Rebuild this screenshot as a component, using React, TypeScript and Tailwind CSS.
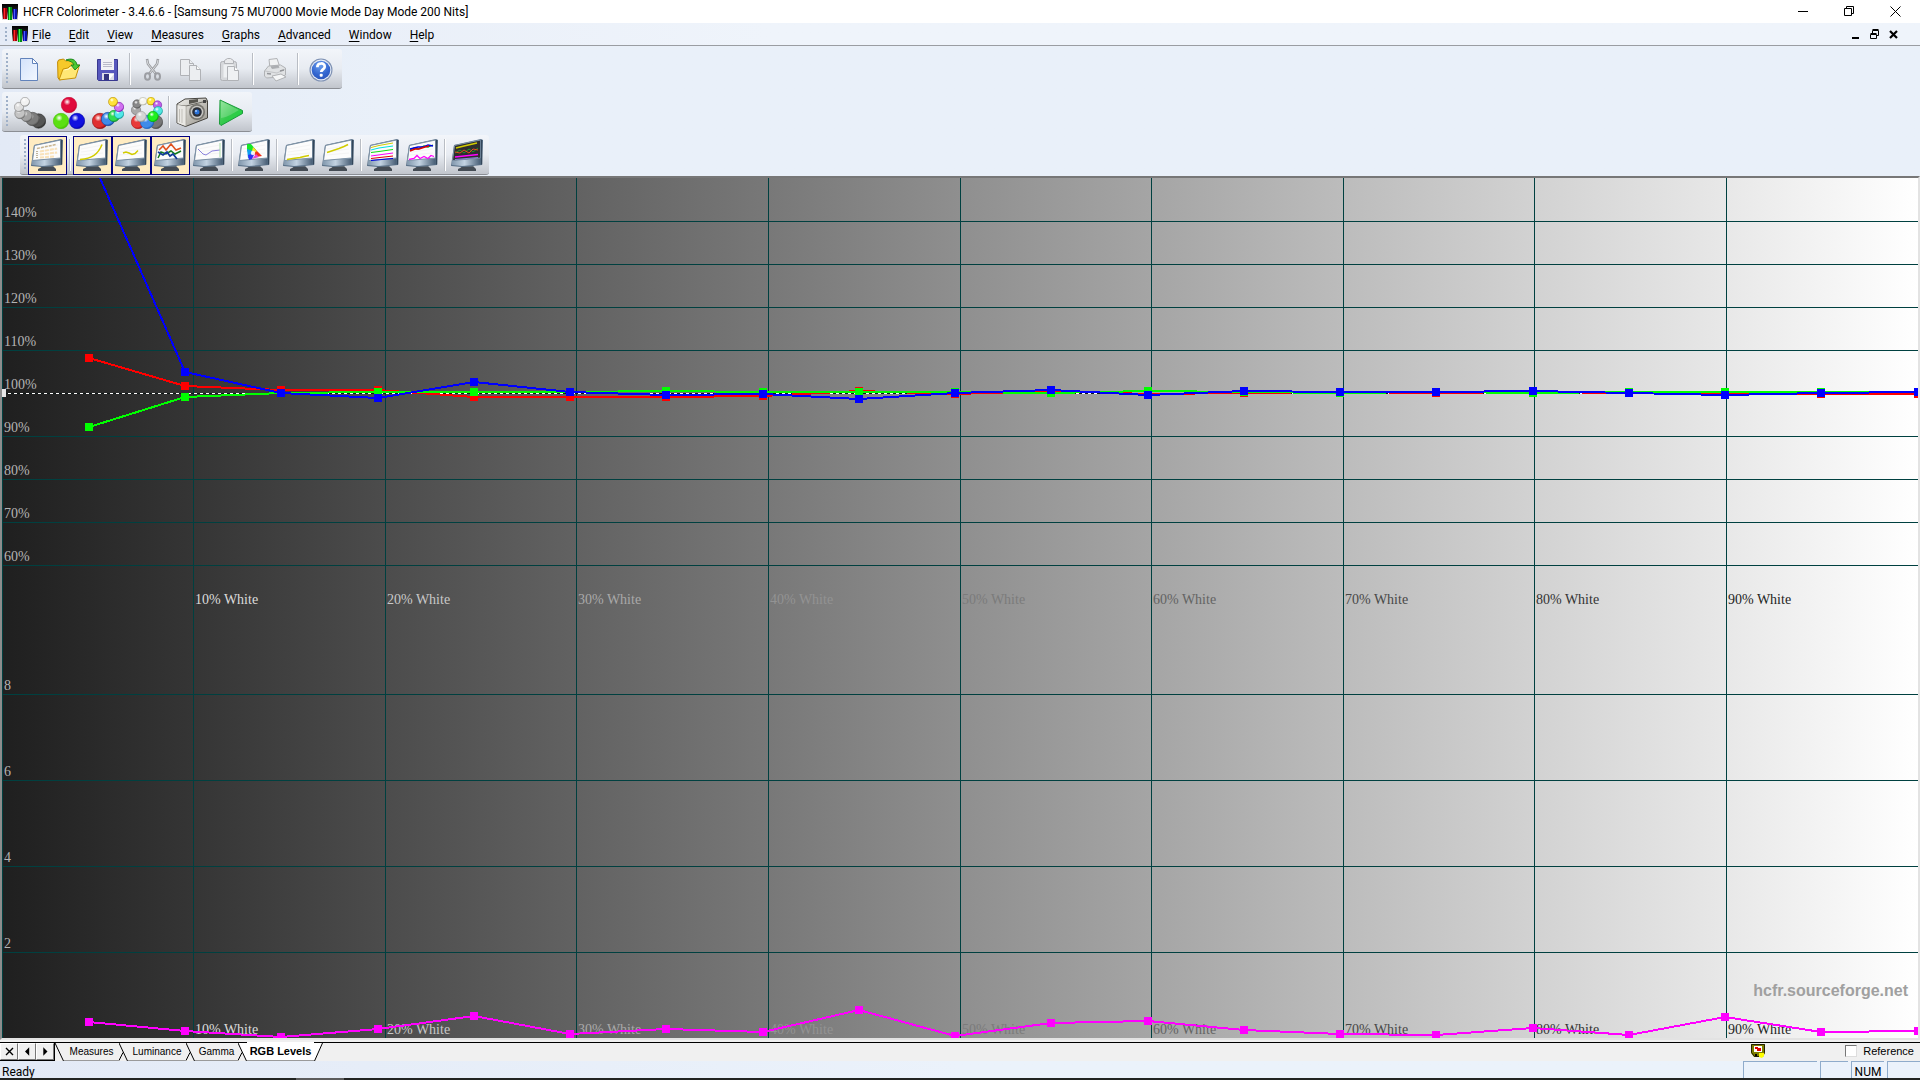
import { useEffect, useRef, useState } from 'react';
import type { ReactNode } from 'react';

const UI_FONT = "font-['Roboto','Noto_Sans',sans-serif]";

/* ---------- application logo ---------- */
function AppLogo() {
  return (
    <svg width="16" height="16" viewBox="0 0 16 16" className="shrink-0" aria-hidden="true">
      <defs>
        <linearGradient id="logoBg" x1="0" y1="0" x2="0" y2="1">
          <stop offset="0" stopColor="#000" />
          <stop offset=".45" stopColor="#222" />
          <stop offset="1" stopColor="#e8e8e8" />
        </linearGradient>
      </defs>
      <rect width="16" height="16" fill="url(#logoBg)" />
      <rect x="1" y="4" width="4" height="11" fill="#a00008" />
      <rect x="2" y="4" width="1" height="11" fill="#ff2a2a" />
      <rect x="6" y="3" width="4" height="13" fill="#008a14" />
      <rect x="7" y="3" width="1" height="13" fill="#3bff4a" />
      <rect x="11" y="5" width="4" height="10" fill="#0a10a8" />
      <rect x="12" y="5" width="1" height="10" fill="#4a5cff" />
    </svg>
  );
}

/* ---------- toolbar icons ---------- */
function NewIcon() {
  return (
    <svg width="24" height="24" viewBox="0 0 24 24">
      <defs>
        <linearGradient id="pg" x1="0" y1="0" x2="1" y2="1">
          <stop offset="0" stopColor="#d3e2fb" />
          <stop offset="1" stopColor="#f2f7ff" />
        </linearGradient>
      </defs>
      <path d="M2.500 .5h12l5 5v17h-17z" fill="url(#pg)" stroke="#6283bb" />
      <path d="M14.500 .5v5h5z" fill="#fff" stroke="#6283bb" strokeLinejoin="round" />
    </svg>
  );
}

function OpenIcon() {
  return (
    <svg width="24" height="24" viewBox="0 0 24 24">
      <path d="M.6 4l1-2 5-1 2 2 7-1 2 2v8L3 22l-2-2z" fill="#f6c92a" stroke="#c28a06" />
      <path d="M2 22L6 11l5-1 2-2 9.500-1-4 13z" fill="#ffe775" stroke="#c89208" strokeLinejoin="round" />
      <path d="M7.500 12l4.500-1 2-2 6-.5" stroke="#fff8c8" fill="none" />
      <path d="M9 2c5-2 10-1 11 5h3l-5 5-4-5h3c-1-3-4-4-8-5z" fill="#4cc832" stroke="#16811a" strokeWidth=".9" />
    </svg>
  );
}

function SaveIcon() {
  return (
    <svg width="24" height="24" viewBox="0 0 24 24">
      <path d="M1.500 1.500h20v21h-19l-1-1z" fill="#5757bd" stroke="#38388f" />
      <rect x="5" y="1" width="13" height="11" fill="#f1f1f6" />
      <path d="M7 4.500h9M7 6.500h9M7 8.500h9" stroke="#b9b9c9" />
      <rect x="6" y="15" width="12" height="7" fill="#dcdce8" />
      <path d="M8 16h5v6H8z" fill="#34347e" />
      <path d="M13 16h5l-5 6z" fill="#fff" />
    </svg>
  );
}

function CutIcon() {
  return (
    <svg width="24" height="24" viewBox="0 0 24 24" fill="none">
      <path d="M6 1l1 5 8 10M17 1l-1 5-8 10" stroke="#9b9da1" strokeWidth="2.600" />
      <path d="M6 2l1 4 7 9M17 2l-1 4-7 9" stroke="#d9dbde" strokeWidth="1" />
      <ellipse cx="6.500" cy="18.500" rx="2.500" ry="3.300" stroke="#9c9ea3" strokeWidth="2" />
      <ellipse cx="16.500" cy="18.500" rx="2.500" ry="3.300" stroke="#9c9ea3" strokeWidth="2" />
    </svg>
  );
}

function CopyIcon() {
  return (
    <svg width="24" height="24" viewBox="0 0 24 24" stroke="#b0b2b6" fill="#eceef1">
      <path d="M.5 1.500h9l4 4v12H.5z" />
      <path d="M9.500 1.500v4h4" />
      <path d="M9.500 7.500h7l4 4v11h-11z" />
      <path d="M16.500 7.500v4h4" fill="#fafafa" />
    </svg>
  );
}

function PasteIcon() {
  return (
    <svg width="24" height="24" viewBox="0 0 24 24" stroke="#b0b2b6" fill="#d6d8db">
      <rect x="1.500" y="3.500" width="16" height="19" rx="2" />
      <rect x="4.500" y="6.500" width="10" height="13" fill="#eef0f2" stroke="none" />
      <path d="M5.500 5.500v-3l3-2h3l3 2v3z" fill="#e9eaec" />
      <path d="M8.500 8.500h7l4 4v10h-11z" fill="#eff1f3" />
      <path d="M15.500 8.500v4h4" fill="#fff" />
    </svg>
  );
}

function PrintIcon() {
  return (
    <svg width="24" height="24" viewBox="0 0 24 24" stroke="#b0b2b5">
      <path d="M5 1.500l8-1 3 9-10 1z" fill="#f1f2f3" />
      <path d="M.5 13l4-5 12-1 5 3v7l-5 2-14 1-2-2z" fill="#e0e2e4" />
      <path d="M1 13l12 2 8-4" fill="none" stroke="#c2c4c7" />
      <path d="M7 8.500l7-1 1 2-7 1z" fill="#a9abaf" />
      <path d="M8 18l9-2 5 3-10 4z" fill="#f5f6f7" />
      <path d="M3 15.500l4 .5M16 13l4-1" stroke="#94969a" strokeWidth="1.500" />
    </svg>
  );
}

function HelpIcon() {
  return (
    <svg width="24" height="24" viewBox="0 0 24 24">
      <defs>
        <radialGradient id="hp" cx=".45" cy=".25" r=".85">
          <stop offset="0" stopColor="#6da0ee" />
          <stop offset=".6" stopColor="#3265cf" />
          <stop offset="1" stopColor="#2a53b8" />
        </radialGradient>
      </defs>
      <circle cx="12" cy="12" r="11.500" fill="#7e91b3" />
      <circle cx="12" cy="12" r="10.400" fill="#e7edf7" />
      <circle cx="12" cy="12" r="9.300" fill="url(#hp)" />
      <path d="M8.300 9.200c0-5 7.800-4.800 7.400-.4-.2 2.500-3.400 2.700-3.500 5.200" stroke="#fff" strokeWidth="2.700" fill="none" />
      <rect x="10.700" y="15.700" width="3" height="3" rx="1" fill="#fff" />
    </svg>
  );
}

type Ball = [number, number, number, string, string];

function Balls({ id, balls }: { id: string; balls: Ball[] }) {
  return (
    <svg width="32" height="32" viewBox="0 0 32 32">
      <defs>
        {balls.map((b, i) => (
          <radialGradient key={i} id={id + i} cx=".38" cy=".3" r=".75">
            <stop offset="0" stopColor="#fff" />
            <stop offset=".3" stopColor={b[3]} />
            <stop offset=".75" stopColor={b[3]} />
            <stop offset="1" stopColor={b[4]} />
          </radialGradient>
        ))}
      </defs>
      {balls.map((b, i) => (
        <circle key={i} cx={b[0]} cy={b[1]} r={b[2] - 0.3} fill={`url(#${id}${i})`} stroke={b[4]} strokeWidth=".6" />
      ))}
    </svg>
  );
}

const grayBalls: Ball[] = [
  [24.500, 24, 7.500, '#555', '#222'],
  [18.500, 22, 7, '#7c7c7c', '#484848'],
  [12.500, 19, 6, '#a2a2a2', '#5c5c5c'],
  [6, 16.500, 5.500, '#c4c4c4', '#707070'],
  [5, 10, 5, '#dedede', '#8a8a8a'],
  [11, 4.800, 4.800, '#f2f2f2', '#8c8c8c'],
];
const primaryBalls: Ball[] = [
  [16, 8, 8, '#e00a3c', '#c4002c'],
  [8, 24, 8, '#5be012', '#43bd00'],
  [24, 24, 8, '#1010e0', '#0000a8'],
];
const colorBalls: Ball[] = [
  [8, 24, 8, '#e03030', '#900a0a'],
  [16, 22, 7, '#3f8be8', '#0d3ea0'],
  [22, 19, 6, '#30dc50', '#0a8a28'],
  [27, 17, 5, '#50e8e8', '#0d9494'],
  [27, 10, 5, '#d070f0', '#7a10a8'],
  [21, 4.800, 4.800, '#ffe23c', '#b58a00'],
];
const ringBalls: Ball[] = [
  [7, 25, 7, '#e83a3a', '#b01010'],
  [25, 25, 7, '#777', '#444'],
  [16, 25, 7, '#3f8be8', '#1660c0'],
  [5, 13, 5, '#aaa', '#777'],
  [6, 7, 4.500, '#888', '#555'],
  [12, 4.200, 4.200, '#f5f5f0', '#b5b5a5'],
  [20, 4.200, 4.200, '#ffe83c', '#bd9a00'],
  [26.500, 8, 4.500, '#c060e8', '#7a28b0'],
  [27, 14, 4.800, '#50e8e0', '#1aa0a0'],
  [22, 19.500, 5.500, '#20f020', '#00a800'],
  [10, 19.500, 5.500, '#d5d5d5', '#999'],
];

function CameraIcon() {
  return (
    <svg width="32" height="32" viewBox="0 0 32 32">
      <defs>
        <linearGradient id="cam" x1="0" y1="0" x2="1" y2="1">
          <stop offset="0" stopColor="#f1f0ec" />
          <stop offset="1" stopColor="#96938b" />
        </linearGradient>
      </defs>
      <path d="M1 7l8-5 10-.5L30 1l1.500 3v17l-22 8.500L1 26z" fill="url(#cam)" stroke="#46443f" />
      <path d="M1 8l9 1 21-5" fill="none" stroke="#6a6862" />
      <path d="M10 9v20" stroke="#aaa8a0" />
      <path d="M1.500 8l8 1v20l-8-3z" fill="#e9e8e4" />
      <path d="M3.500 12v13M6 12v14" stroke="#c3c1bb" />
      <path d="M13 3l9-1v3l-9 2z" fill="#57554f" />
      <circle cx="21" cy="15" r="8" fill="#77756f" />
      <circle cx="21" cy="15" r="6.300" fill="#c7c6c2" />
      <circle cx="21" cy="15" r="4.800" fill="#2b2f38" />
      <circle cx="21" cy="15" r="2.500" fill="#2a72d8" />
      <circle cx="20" cy="14" r="1" fill="#a8ccff" />
      <rect x="27" y="3" width="3" height="3" fill="#444" />
    </svg>
  );
}

function PlayIcon() {
  return (
    <svg width="24" height="28" viewBox="0 0 24 28">
      <defs>
        <linearGradient id="pl" x1="0" y1="0" x2="1" y2="1">
          <stop offset="0" stopColor="#7fe08a" />
          <stop offset=".5" stopColor="#35c94c" />
          <stop offset="1" stopColor="#14d83a" />
        </linearGradient>
      </defs>
      <path d="M1 1l22.500 10.500v3L2 26.500 .5 25z" fill="url(#pl)" stroke="#1a9a3a" strokeLinejoin="round" />
      <path d="M2 19c8-1 12-5 18-8L2 2z" fill="#fff" opacity=".2" />
    </svg>
  );
}

function Monitor({ children, dark = false }: { children?: ReactNode; dark?: boolean }) {
  return (
    <svg width="32" height="33" viewBox="0 0 32 33" fill="none" className="mr-px">
      <defs>
        <linearGradient id="bezel" x1="0" y1="0" x2="1" y2="0">
          <stop offset="0" stopColor="#8298ad" />
          <stop offset=".45" stopColor="#c3d3e2" />
          <stop offset="1" stopColor="#4b6178" />
        </linearGradient>
      </defs>
      <path d="M11 26l11-1 1 4H10z" fill="#5d6873" />
      <path d="M7 30l4-2h12l2 2v2H7z" fill="#454c54" />
      <path d="M3 6L30 0l2 1-1 25-20 2-11-1z" fill="#5a7188" />
      <path d="M1 21.500l28-2.500v6.500l-18 1.500-10-1z" fill="url(#bezel)" />
      <path d="M3.500 6.500L29.500 1v18L1.500 21.500z" fill={dark ? '#2e2e2e' : '#fcfcfc'} stroke="#7d92a6" />
      <path d="M30.500 1v24.500" stroke="#33465a" strokeWidth="1.500" />
      {!dark && <path d="M5 10l22-4M5 13l22-3M4 16l23-2" stroke="#f4f4f4" />}
      {children}
    </svg>
  );
}

const measureMonitor = (
  <Monitor>
    <path d="M6 9.500l19-4" stroke="#c9b58f" strokeWidth="1.500" strokeDasharray="3 1" />
    <path d="M9 12.500l17-3M9 15.500l17-2M9 18.500l14-1" stroke="#f9e2ba" strokeWidth="2" strokeDasharray="4 1" />
    <path d="M6 12v8" stroke="#bfb39b" strokeWidth="2" strokeDasharray="1 1" />
  </Monitor>
);
const luminanceMonitor = (
  <Monitor>
    <path d="M4 20.500c12-1 18-5 22-15" stroke="#d2cc00" strokeWidth="1.500" />
  </Monitor>
);
const gammaMonitor = (
  <Monitor>
    <path d="M8 14l3-1 3 1 3 1.500 3-1 3-3" stroke="#d2cc00" strokeWidth="1.500" />
  </Monitor>
);
const rgbMonitor = (
  <Monitor>
    <path d="M4 19l3-6 5 2 5-3 4 3 6-3" stroke="#137c1c" strokeWidth="1.500" />
    <path d="M5 11l4-4 3 4 5-6 5 6 5-2" stroke="#e0501c" strokeWidth="1.500" />
    <path d="M4 13l5 3 4-3 3 4 3-2 4 5" stroke="#103a98" strokeWidth="1.800" />
  </Monitor>
);
const tempMonitor = (
  <Monitor>
    <path d="M5 10l5 5 3 1 6-4 8-1" stroke="#8a82dc" />
    <path d="M27 4v14" stroke="#a8dca8" />
  </Monitor>
);
const cieMonitor = (
  <Monitor>
    <path d="M9 5l4 0 5 6-6 3-3-2z" fill="#18e628" />
    <path d="M9 10l6 2-3 8-2-1z" fill="#109cf0" />
    <path d="M10 16l7-2-3 6-3 1z" fill="#3030f0" />
    <path d="M16 9l8 8-6 1-3-5z" fill="#f03018" />
    <path d="M15 8l4 4-3 2-2-2z" fill="#f0e82a" />
    <path d="M14 20l4-5 3 3z" fill="#e848d0" />
    <circle cx="15" cy="14" r="2.200" fill="#fff" opacity=".85" />
  </Monitor>
);
const lowMonitor = (
  <Monitor>
    <path d="M4 20.500l6-1 7-1 4-1 5-1" stroke="#d2cc00" strokeWidth="1.500" />
  </Monitor>
);
const highMonitor = (
  <Monitor>
    <path d="M5 13.500l6-2 6-2 5-2 4-2" stroke="#d2cc00" strokeWidth="1.500" />
  </Monitor>
);
const linesMonitor = (
  <Monitor>
    <path d="M4 8.500l8-2 14-2.500" stroke="#d2cc00" />
    <path d="M4 11l8-2 14-2" stroke="#00e4e4" />
    <path d="M4 13.500l8-1 14-2" stroke="#10e010" />
    <path d="M4 17l22-3" stroke="#f0f" />
    <path d="M4 19.500l22-2.500" stroke="#e00000" />
    <path d="M4 21.500l22-2" stroke="#0000e0" />
  </Monitor>
);
const wavesMonitor = (
  <Monitor>
    <path d="M4 11l4-2 4 1 6-3 4 1 5-2" stroke="#00a818" strokeWidth="1.300" />
    <path d="M4 10l4-1 4-1 5 0 5-2 5 1" stroke="#0000e0" strokeWidth="1.300" />
    <path d="M4 12l5-2 4 0 6-2 4-1" stroke="#e00000" strokeWidth="1.500" />
    <path d="M3 20.500l5-1 3-3 3 3 4-2 4 2 3-3 3 1" stroke="#f0f" strokeWidth="1.300" />
  </Monitor>
);
const darkMonitor = (
  <Monitor dark>
    <path d="M5 9l8-2 13-3" stroke="#d2cc00" strokeWidth="1.300" />
    <path d="M4 14l5-3 4 3 5-4 4 3 5-4" stroke="#1c9a28" />
    <path d="M4 13l5 1 4-3 5 3 4-4 5 1" stroke="#e0501c" />
    <path d="M4 18l23-2.500" stroke="#f0f" strokeWidth="1.300" />
    <path d="M4 20.500l23-2" stroke="#8a82dc" />
  </Monitor>
);

/* ---------- toolbar ---------- */
type Item = 'sep' | { name: string; icon: ReactNode; on?: boolean };

const fileTools: Item[] = [
  { name: 'New', icon: <NewIcon /> },
  { name: 'Open', icon: <OpenIcon /> },
  { name: 'Save', icon: <SaveIcon /> },
  'sep',
  { name: 'Cut', icon: <CutIcon /> },
  { name: 'Copy', icon: <CopyIcon /> },
  { name: 'Paste', icon: <PasteIcon /> },
  'sep',
  { name: 'Print', icon: <PrintIcon /> },
  'sep',
  { name: 'About', icon: <HelpIcon /> },
];
const measureTools: Item[] = [
  { name: 'Gray scale', icon: <Balls id="bg" balls={grayBalls} /> },
  { name: 'Primaries', icon: <Balls id="bp" balls={primaryBalls} /> },
  { name: 'Primaries and secondaries', icon: <Balls id="bc" balls={colorBalls} /> },
  { name: 'Full measure', icon: <Balls id="br" balls={ringBalls} /> },
  'sep',
  { name: 'Snapshot', icon: <CameraIcon /> },
  { name: 'Run', icon: <PlayIcon /> },
];
const viewTools: Item[] = [
  { name: 'Measures view', icon: measureMonitor, on: true },
  'sep',
  { name: 'Luminance view', icon: luminanceMonitor, on: true },
  { name: 'Gamma view', icon: gammaMonitor, on: true },
  { name: 'RGB levels view', icon: rgbMonitor, on: true },
  { name: 'Color temperature view', icon: tempMonitor },
  'sep',
  { name: 'CIE diagram', icon: cieMonitor },
  'sep',
  { name: 'Near black', icon: lowMonitor },
  { name: 'Near white', icon: highMonitor },
  'sep',
  { name: 'Saturation luminance', icon: linesMonitor },
  { name: 'Saturation shift', icon: wavesMonitor },
  'sep',
  { name: 'Combined free measures', icon: darkMonitor },
];

function Toolbar({ label, items }: { label: string; items: Item[] }) {
  return (
    <div
      role="toolbar"
      aria-label={label}
      className="flex h-10 w-fit items-start rounded-[3px] border-b border-[#8b8e94] bg-linear-to-b from-[#f2f5fa] via-[#e8ecf2] via-50% to-[#c1c5cc] pr-0.5"
    >
      <span className="mt-1 ml-1 h-8 w-1 bg-[repeating-linear-gradient(to_bottom,#9fb0c8_0_2px,transparent_2px_4px)] bg-size-[2px_100%] bg-no-repeat" />
      {items.map((it, i) =>
        it === 'sep' ? (
          <span key={i} className="flex h-10 w-1.5 justify-center py-1">
            <span className="w-px bg-[#b9bdc4]" />
            <span className="w-px bg-white" />
          </span>
        ) : (
          <button
            key={i}
            aria-label={it.name}
            aria-pressed={it.on}
            className={
              it.on
                ? 'mt-px flex size-[39px] items-center border border-[#000080] bg-[#ffecc2] pl-0.5'
                : 'mt-px flex size-[39px] items-center justify-center'
            }
          >
            {it.icon}
          </button>
        ),
      )}
    </div>
  );
}

/* ---------- chart ---------- */
const POINT_X = [87, 183, 279, 376, 472, 568, 664, 761, 857, 953, 1049, 1146, 1242, 1338, 1434, 1531, 1627, 1723, 1819, 1916];
const RED = [180, 208, 212, 212, 219, 219, 219, 218, 213, 216, 213, 216, 215, 214, 215, 214, 215, 215, 216, 216];
const GREEN = [249, 219, 215, 214, 214, 214, 213, 214, 214, 214, 215, 213, 214, 215, 214, 215, 214, 214, 214, 214];
const BLUE = [-25, 194, 215, 220, 204, 214, 217, 216, 221, 215, 212, 217, 213, 214, 214, 213, 215, 217, 215, 214];
const MAGENTA = [844, 853, 859, 851, 838, 856, 851, 854, 832, 858, 845, 843, 852, 856, 857, 850, 857, 839, 854, 853];
const SERIES: [string, number[]][] = [
  ['#ff0000', RED],
  ['#00ff00', GREEN],
  ['#0000ff', BLUE],
  ['#ff00ff', MAGENTA],
];
const LEVEL_ROWS: [string, number][] = [
  ['140%', 43], ['130%', 86], ['120%', 129], ['110%', 172], ['100%', 215],
  ['90%', 258], ['80%', 301], ['70%', 344], ['60%', 387],
];
const DELTA_ROWS: [string, number][] = [['8', 516], ['6', 602], ['4', 688], ['2', 774]];
const COLUMNS: [string, number, string][] = [
  ['10% White', 191, '#dcdcdc'], ['20% White', 383, '#c8c8c8'], ['30% White', 574, '#a9a9a9'],
  ['40% White', 766, '#939393'], ['50% White', 958, '#7b7b7b'], ['60% White', 1149, '#636363'],
  ['70% White', 1341, '#484848'], ['80% White', 1532, '#333333'], ['90% White', 1724, '#1e1e1e'],
];
const BASE_W = 1916;
const BASE_H = 860;

function Chart() {
  const ref = useRef<HTMLDivElement>(null);
  const [size, setSize] = useState({ w: BASE_W, h: BASE_H });
  useEffect(() => {
    const el = ref.current;
    if (!el) return;
    const ro = new ResizeObserver(() => setSize({ w: el.clientWidth, h: el.clientHeight }));
    ro.observe(el);
    return () => ro.disconnect();
  }, []);
  const px = (x: number) => Math.round((x * size.w) / BASE_W);
  const py = (y: number) => Math.round((y * size.h) / BASE_H);

  return (
    <div
      ref={ref}
      className="relative min-h-0 flex-1 overflow-hidden border-t-2 border-r-2 border-b-2 border-l-2 border-t-[#777] border-r-[#e3e3e3] border-b-[#e3e3e3] border-l-[#8c8c8c] bg-[linear-gradient(to_right,#1f1f1f_0%,#353535_10%,#4c4c4c_20%,#626262_30%,#787878_40%,#8f8f8f_50%,#a5a5a5_60%,#bcbcbc_70%,#d2d2d2_80%,#e8e8e8_90%,#ffffff_100%)]"
    >
      <svg className="absolute inset-0 size-full font-['Liberation_Serif',serif] text-sm" role="img" aria-label="RGB levels by gray level">
        <g stroke="#004040" shapeRendering="crispEdges">
          <line x1="0.5" x2="0.5" y1="0" y2={size.h} />
          {COLUMNS.map(([t, x]) => (
            <line key={t} x1={px(x) + 0.5} x2={px(x) + 0.5} y1="0" y2={size.h} />
          ))}
          {[...LEVEL_ROWS, ...DELTA_ROWS].map(([t, y]) =>
            t === '100%' ? null : <line key={t} x1="0" x2={size.w} y1={py(y) + 0.5} y2={py(y) + 0.5} />,
          )}
        </g>
        <g shapeRendering="crispEdges">
          <line x1="0" x2={size.w} y1={py(215) + 0.5} y2={py(215) + 0.5} stroke="#101818" />
          <line x1="0" x2={size.w} y1={py(215) + 0.5} y2={py(215) + 0.5} stroke="#fff" strokeDasharray="3 3" />
          <rect x="0" y={py(215) - 4} width="4" height="8" fill="#e6e6e6" />
        </g>
        <g fill="#b4b4b4">
          {[...LEVEL_ROWS, ...DELTA_ROWS].map(([t, y]) => (
            <text key={t} x="2" y={py(y) - 4}>{t}</text>
          ))}
        </g>
        {COLUMNS.map(([t, x, c]) => (
          <g key={t} fill={c}>
            <text x={px(x) + 2} y={py(426)}>{t}</text>
            <text x={px(x) + 2} y={py(856)}>{t}</text>
          </g>
        ))}
        {SERIES.map(([c, ys]) => (
          <g key={c} shapeRendering="crispEdges">
            <polyline fill="none" stroke={c} strokeWidth="2" points={ys.map((y, i) => `${px(POINT_X[i])},${py(y)}`).join(' ')} />
            {ys.map((y, i) => (
              <rect key={i} x={px(POINT_X[i]) - 4} y={py(y) - 4} width="8" height="8" fill={c} />
            ))}
          </g>
        ))}
      </svg>
      <span className="absolute right-2.5 bottom-9 font-['Liberation_Sans',sans-serif] text-base leading-[22px] font-bold text-[#a0a0a0]">
        hcfr.sourceforge.net
      </span>
    </div>
  );
}

/* ---------- sheet tabs ---------- */
function Slant({ kind }: { kind: 'start' | 'mid' | 'toActive' | 'end' }) {
  return (
    <svg width="9" height="18" viewBox="0 0 9 18" className="shrink-0" aria-hidden="true">
      {kind === 'toActive' && <path d="M0 0h9v18L0 0z" fill="#fff" />}
      {kind === 'end' && <path d="M0 0h9L0 18z" fill="#fff" />}
      {kind !== 'end' && <path d="M0 0l8.500 18" stroke="#000" fill="none" />}
      {(kind === 'mid' || kind === 'toActive') && <path d="M0 17.500l4-8" stroke="#000" fill="none" />}
      {kind === 'end' && <path d="M8.500 0L.5 18" stroke="#000" fill="none" />}
    </svg>
  );
}

function NavButton({ name, d }: { name: string; d: string }) {
  return (
    <button
      aria-label={name}
      className="flex h-[17px] w-[18px] items-center justify-center border border-t-white border-r-[#777] border-b-[#777] border-l-white bg-[#f0f0f0]"
    >
      <svg width="9" height="9" viewBox="0 0 9 9" stroke="#000" strokeWidth="1.400">
        <path d={d} />
      </svg>
    </button>
  );
}

const MENUS = ['File', 'Edit', 'View', 'Measures', 'Graphs', 'Advanced', 'Window', 'Help'];
const TAB = 'h-[18px] border-b border-[#9a9a9a] bg-[#f0f0f0] text-center text-[10px] leading-4';

export default function App() {
  return (
    <div className={`flex h-screen flex-col overflow-hidden bg-[#e9f0f9] text-xs text-black ${UI_FONT}`}>
      <header className="flex h-[23px] shrink-0 items-center bg-white pl-0.5">
        <AppLogo />
        <h1 className="ml-[5px] flex-1 text-xs whitespace-nowrap">
          HCFR Colorimeter - 3.4.6.6 - [Samsung 75 MU7000 Movie Mode Day Mode 200 Nits]
        </h1>
        <div className="mr-0.5 flex">
          <button aria-label="Minimize" className="flex h-5 w-[46px] items-center justify-center">
            <svg width="11" height="11" viewBox="0 0 11 11" fill="none" stroke="#000"><path d="M0 5.500h10" /></svg>
          </button>
          <button aria-label="Restore" className="flex h-5 w-[46px] items-center justify-center">
            <svg width="11" height="11" viewBox="0 0 11 11" fill="none" stroke="#000"><path d="M.5 2.500h7v7h-7zM2.500 2.500v-2h7v7h-2" /></svg>
          </button>
          <button aria-label="Close" className="flex h-5 w-[46px] items-center justify-center">
            <svg width="11" height="11" viewBox="0 0 11 11" fill="none" stroke="#000"><path d="M.5 .5l10 10M10.500 .5l-10 10" /></svg>
          </button>
        </div>
      </header>

      <nav className="flex h-[23px] shrink-0 items-center border-b border-[#9a9da2] bg-linear-to-r from-[#e5ebf6] to-[#eff4fb] to-40% pl-[5px]">
        <span className="mr-[5px] h-3.5 w-0.5 bg-[repeating-linear-gradient(to_bottom,#9fb0c8_0_2px,transparent_2px_4px)]" />
        <AppLogo />
        <div className="ml-1 flex flex-1 gap-[18px] pt-0.5">
          {MENUS.map((m) => (
            <button key={m} className="text-xs">
              <span className="underline underline-offset-2">{m[0]}</span>
              {m.slice(1)}
            </button>
          ))}
        </div>
        <div className="mr-[22px] flex items-center gap-[10px]">
          <button aria-label="Minimize document">
            <svg width="9" height="10" viewBox="0 0 9 10"><path d="M1 8h7v2H1z" /></svg>
          </button>
          <button aria-label="Restore document">
            <svg width="9" height="10" viewBox="0 0 9 10" fill="none" stroke="#000"><path d="M.5 5.500h6v4h-6zM.5 4.500h6M2.500 4V1.500h6v5H7M2.500 .5h6" /></svg>
          </button>
          <button aria-label="Close document">
            <svg width="9" height="9" viewBox="0 0 9 9" stroke="#000" strokeWidth="2.200"><path d="M1 1l7 7M8 1L1 8" /></svg>
          </button>
        </div>
      </nav>

      <div className="flex shrink-0 flex-col gap-[3px] bg-linear-to-r from-[#e3eaf6] to-[#e9f0f9] to-20% pt-[3px] pb-px pl-0.5">
        <Toolbar label="Standard" items={fileTools} />
        <Toolbar label="Measures" items={measureTools} />
        <div className="pl-[18px]">
          <Toolbar label="Views" items={viewTools} />
        </div>
      </div>

      <main className="flex min-h-0 flex-1 flex-col">
        <Chart />
      </main>

      <div className="flex h-[21px] shrink-0 items-start bg-[#f0f0f0] font-['Liberation_Sans',sans-serif]">
        <div className="mt-0.5 flex w-full items-start border-t border-black">
          <div className="flex shrink-0 border-r border-b border-black">
            <NavButton name="Close view" d="M1 1l7 7M8 1L1 8" />
            <NavButton name="Previous view" d="M5.500 2L3 4.500 5.500 7z" />
            <NavButton name="Next view" d="M3 2l2.500 2.500L3 7z" />
          </div>
          <div role="tablist" aria-label="Views" className="flex">
            <Slant kind="start" />
            <button role="tab" aria-selected="false" className={`${TAB} w-[55px]`}>Measures</button>
            <Slant kind="mid" />
            <button role="tab" aria-selected="false" className={`${TAB} w-[58px]`}>Luminance</button>
            <Slant kind="mid" />
            <button role="tab" aria-selected="false" className={`${TAB} w-[43px]`}>Gamma</button>
            <Slant kind="toActive" />
            <button role="tab" aria-selected="true" className="-mt-px h-[19px] w-[67px] border-b border-[#9a9a9a] bg-white text-center text-[11px] leading-[18px] font-bold">
              RGB Levels
            </button>
            <Slant kind="end" />
          </div>
          <span className="flex-1" />
          <svg width="14" height="14" viewBox="0 0 14 14" className="mt-px mr-20" aria-hidden="true">
            <path d="M0 0h14v9l-2 4H3L0 9z" fill="#808000" />
            <path d="M.5 .5h13v8l-2 4h-8l-3-4z" fill="none" stroke="#202000" />
            <path d="M3 2h8v6H3z" fill="#fff" />
            <path d="M4 3h3v2H4zM6 4h4v3H6z" fill="#e00000" />
            <path d="M8 9h5v3l-2 2-3-1z" fill="#ff0" />
            <path d="M4 10h2v2H4z" fill="#000" />
          </svg>
          <label className="mr-1.5 flex h-4 items-center gap-[6px] text-[11px]">
            <input type="checkbox" className="size-3 appearance-none border border-t-[#777] border-r-[#ddd] border-b-[#ddd] border-l-[#777] bg-white" />
            Reference
          </label>
        </div>
      </div>

      <footer className="flex h-[17px] shrink-0 items-stretch bg-linear-to-r from-[#e3eaf6] to-[#ebf2fb] to-50% pl-0.5">
        <span className="flex-1 text-xs leading-[22px]">Ready</span>
        <span className="mr-[3px] w-[74px] border-t border-l border-[#8fabcb]" />
        <span className="mr-[3px] w-7 border-t border-l border-[#8fabcb]" />
        <span className="mr-[3px] w-[33px] border-t border-l border-[#8fabcb] text-center leading-5">NUM</span>
        <span className="w-[33px] border-t border-l border-[#8fabcb]" />
      </footer>
      <div className="flex h-0.5 shrink-0 bg-[#222422]">
        <span className="ml-[296px] w-12 bg-[#5c5c5c]" />
      </div>
    </div>
  );
}
